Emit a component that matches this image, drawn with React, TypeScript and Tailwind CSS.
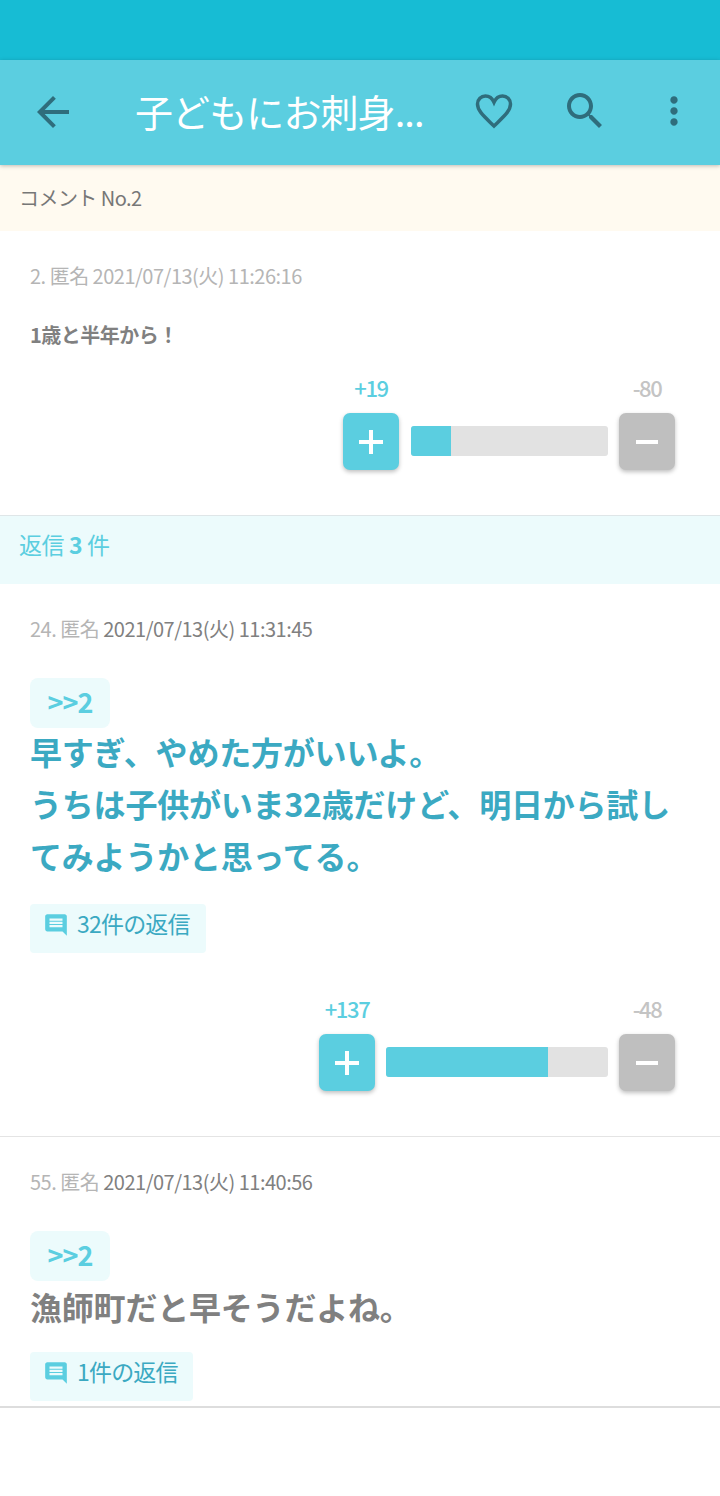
const ccFont = { fontFamily: '"Noto Sans CJK JP", sans-serif' }

function ActionBar() {
  return (
    <div className="relative z-10 flex h-[105px] items-center bg-[#5bcee0] shadow-[0_1px_4px_rgba(0,0,0,0.25)]">
      <div className="-mt-[1px] flex w-[105px] shrink-0 justify-center">
        <svg width="48" height="48" viewBox="0 0 24 24" className="fill-[#2f6d7c]">
          <path d="M20 11H7.83l5.59-5.59L12 4l-8 8 8 8 1.41-1.41L7.83 13H20v-2z" />
        </svg>
      </div>
      <div className="-mt-[4px] w-[322px] shrink-0 pl-[30px] text-[38px] leading-[50px] tracking-[-0.9px] whitespace-nowrap text-white">子どもにお刺身...</div>
      <div className="-mt-[3px] flex flex-1 items-center">
        <svg width="44" height="44" viewBox="0 0 24 24" fill="none" stroke="#2f6d7c" strokeWidth="1.9" className="ml-[45px]">
          <path d="M12 20.2C6.6 14.9 3 12 3 8.2 3 5.6 5 3.8 7.3 3.8c1.9 0 3.7 1.1 4.7 3.4 1-2.3 2.8-3.4 4.7-3.4C19 3.8 21 5.6 21 8.2c0 3.8-3.6 6.7-9 12z" />
        </svg>
        <svg width="48" height="48" viewBox="0 0 24 24" className="ml-[45px] fill-[#2f6d7c]">
          <path d="M15.5 14h-.79l-.28-.27C15.41 12.59 16 11.11 16 9.5 16 5.91 13.09 3 9.5 3S3 5.91 3 9.5 5.91 16 9.5 16c1.61 0 3.09-.59 4.23-1.57l.27.28v.79l5 4.99L20.49 19l-4.99-5zm-6 0C7.01 14 5 11.99 5 9.5S7.01 5 9.5 5 14 7.01 14 9.5 11.99 14 9.5 14z" />
        </svg>
        <svg width="44" height="44" viewBox="0 0 24 24" className="ml-[43px] fill-[#2f6d7c]">
          <path d="M12 8c1.1 0 2-.9 2-2s-.9-2-2-2-2 .9-2 2 .9 2 2 2zm0 2c-1.1 0-2 .9-2 2s.9 2 2 2 2-.9 2-2-.9-2-2-2zm0 6c-1.1 0-2 .9-2 2s.9 2 2 2 2-.9 2-2-.9-2-2-2z" />
        </svg>
      </div>
    </div>
  )
}

function Vote({ plus, minus, fill, track, gap }: { plus: string; minus: string; fill: number; track: number; gap: number }) {
  return (
    <div className="pr-[45px]">
      <div className="flex h-[28px] items-center justify-end text-[22px] font-medium tracking-[-1.4px]">
        <span className="w-[56px] text-center text-[#5bcee0]">{plus}</span>
        <span style={{ width: track + gap + 11 }} />
        <span className="w-[56px] text-center text-[#c4c4c4]">{minus}</span>
      </div>
      <div className="mt-[12px] flex items-center justify-end">
        <div className="flex h-[57px] w-[56px] items-center justify-center rounded-[7px] bg-[#5bcee0] shadow-[0_2px_4px_rgba(0,0,0,0.25)]">
          <div className="relative h-[24px] w-[24px]">
            <div className="absolute left-0 top-[10px] h-[4px] w-[24px] bg-white" />
            <div className="absolute left-[10px] top-0 h-[24px] w-[4px] bg-white" />
          </div>
        </div>
        <div className="mr-[11px] -mt-[1px] h-[30px] overflow-hidden rounded-[3px] bg-[#e2e2e2]" style={{ width: track, marginLeft: gap }}>
          <div className="h-full bg-[#5bcee0]" style={{ width: fill }} />
        </div>
        <div className="flex h-[57px] w-[56px] items-center justify-center rounded-[7px] bg-[#bfbfbf] shadow-[0_2px_4px_rgba(0,0,0,0.25)]">
          <div className="h-[4px] w-[22px] bg-white" />
        </div>
      </div>
    </div>
  )
}

function ReplyChip({ label, width }: { label: string; width: number }) {
  return (
    <div className="flex h-[49px] items-start rounded-[4px] bg-[#ecfbfc] pl-[13px] pt-[2px]" style={{ width }}>
      <svg width="26" height="26" viewBox="0 0 24 24" className="mt-[6px] fill-[#5bcee0]">
        <path d="M22 4c0-1.1-.9-2-2-2H4c-1.1 0-2 .9-2 2v12c0 1.1.9 2 2 2h14l4 4V4zm-4 10H6v-2h12v2zm0-3H6V9h12v2zm0-3H6V6h12v2z" />
      </svg>
      <span className="ml-[8px] text-[23px] leading-[34px] tracking-[-0.8px] text-[#3ba9c2]">{label}</span>
    </div>
  )
}

function Anchor() {
  return (
    <div className="flex h-[50px] w-[80px] items-center justify-center rounded-[8px] bg-[#ecfbfc] pb-[2px] text-[27px] font-bold tracking-[-1px] text-[#5bcee0]">&gt;&gt;2</div>
  )
}

export default function App() {
  return (
    <div className="h-[1496px] w-[720px] overflow-hidden bg-white" style={ccFont}>
      <div className="h-[60px] bg-[#17bcd4]" />
      <ActionBar />

      <div className="flex h-[66px] items-center bg-[#fffaf0] pl-[19px] text-[20px] tracking-[-0.55px] text-[#777777]">コメント No.2</div>

      <div className="h-[285px] border-b border-[#dfe6e8]">
        <div className="flex h-[90px] items-center pl-[30px] text-[20px] tracking-[-0.5px] text-[#b5b5b5]">2. 匿名 2021/07/13(火) 11:26:16</div>
        <div className="-mt-[1px] pl-[30px] text-[20px] leading-[29px] font-bold tracking-[-0.5px] text-[#808080]">1歳と半年から！</div>
        <div className="mt-[24px]">
          <Vote plus="+19" minus="-80" fill={40} track={197} gap={12} />
        </div>
      </div>

      <div className="h-[68px] bg-[#ecfbfc] pl-[19px] pt-[10px] text-[23px] leading-[36px] tracking-[-0.4px] text-[#5bcee0]">
        返信 <span className="font-bold">3</span> 件
      </div>

      <div className="h-[553px] border-b border-[#e4e4e4]">
        <div className="flex h-[90px] items-center pl-[30px] text-[20px] tracking-[-0.5px] text-[#808080]">
          <span className="text-[#b5b5b5]">24. 匿名 </span>&nbsp;2021/07/13(火) 11:31:45
        </div>
        <div className="pl-[30px] pt-[4px]"><Anchor /></div>
        <div className="-mt-[3px] pl-[30px] pr-[40px] text-[32px] leading-[52px] font-bold tracking-[-0.2px] text-[#3ba9c2]">
          <p>早すぎ、やめた方がいいよ。</p>
          <p>うちは子供がいま32歳だけど、明日から試してみようかと思ってる。</p>
        </div>
        <div className="mt-[23px] pl-[30px]"><ReplyChip label="32件の返信" width={176} /></div>
        <div className="mt-[41px]">
          <Vote plus="+137" minus="-48" fill={162} track={222} gap={11} />
        </div>
      </div>

      <div className="h-[271px] border-b-2 border-[#dddddd]">
        <div className="flex h-[90px] items-center pl-[30px] text-[20px] tracking-[-0.5px] text-[#808080]">
          <span className="text-[#b5b5b5]">55. 匿名 </span>&nbsp;2021/07/13(火) 11:40:56
        </div>
        <div className="pl-[30px] pt-[4px]"><Anchor /></div>
        <div className="-mt-[1px] pl-[30px] text-[32px] leading-[52px] font-bold tracking-[-0.2px] text-[#808080]">漁師町だと早そうだよね。</div>
        <div className="mt-[20px] pl-[30px]"><ReplyChip label="1件の返信" width={163} /></div>
      </div>
    </div>
  )
}
